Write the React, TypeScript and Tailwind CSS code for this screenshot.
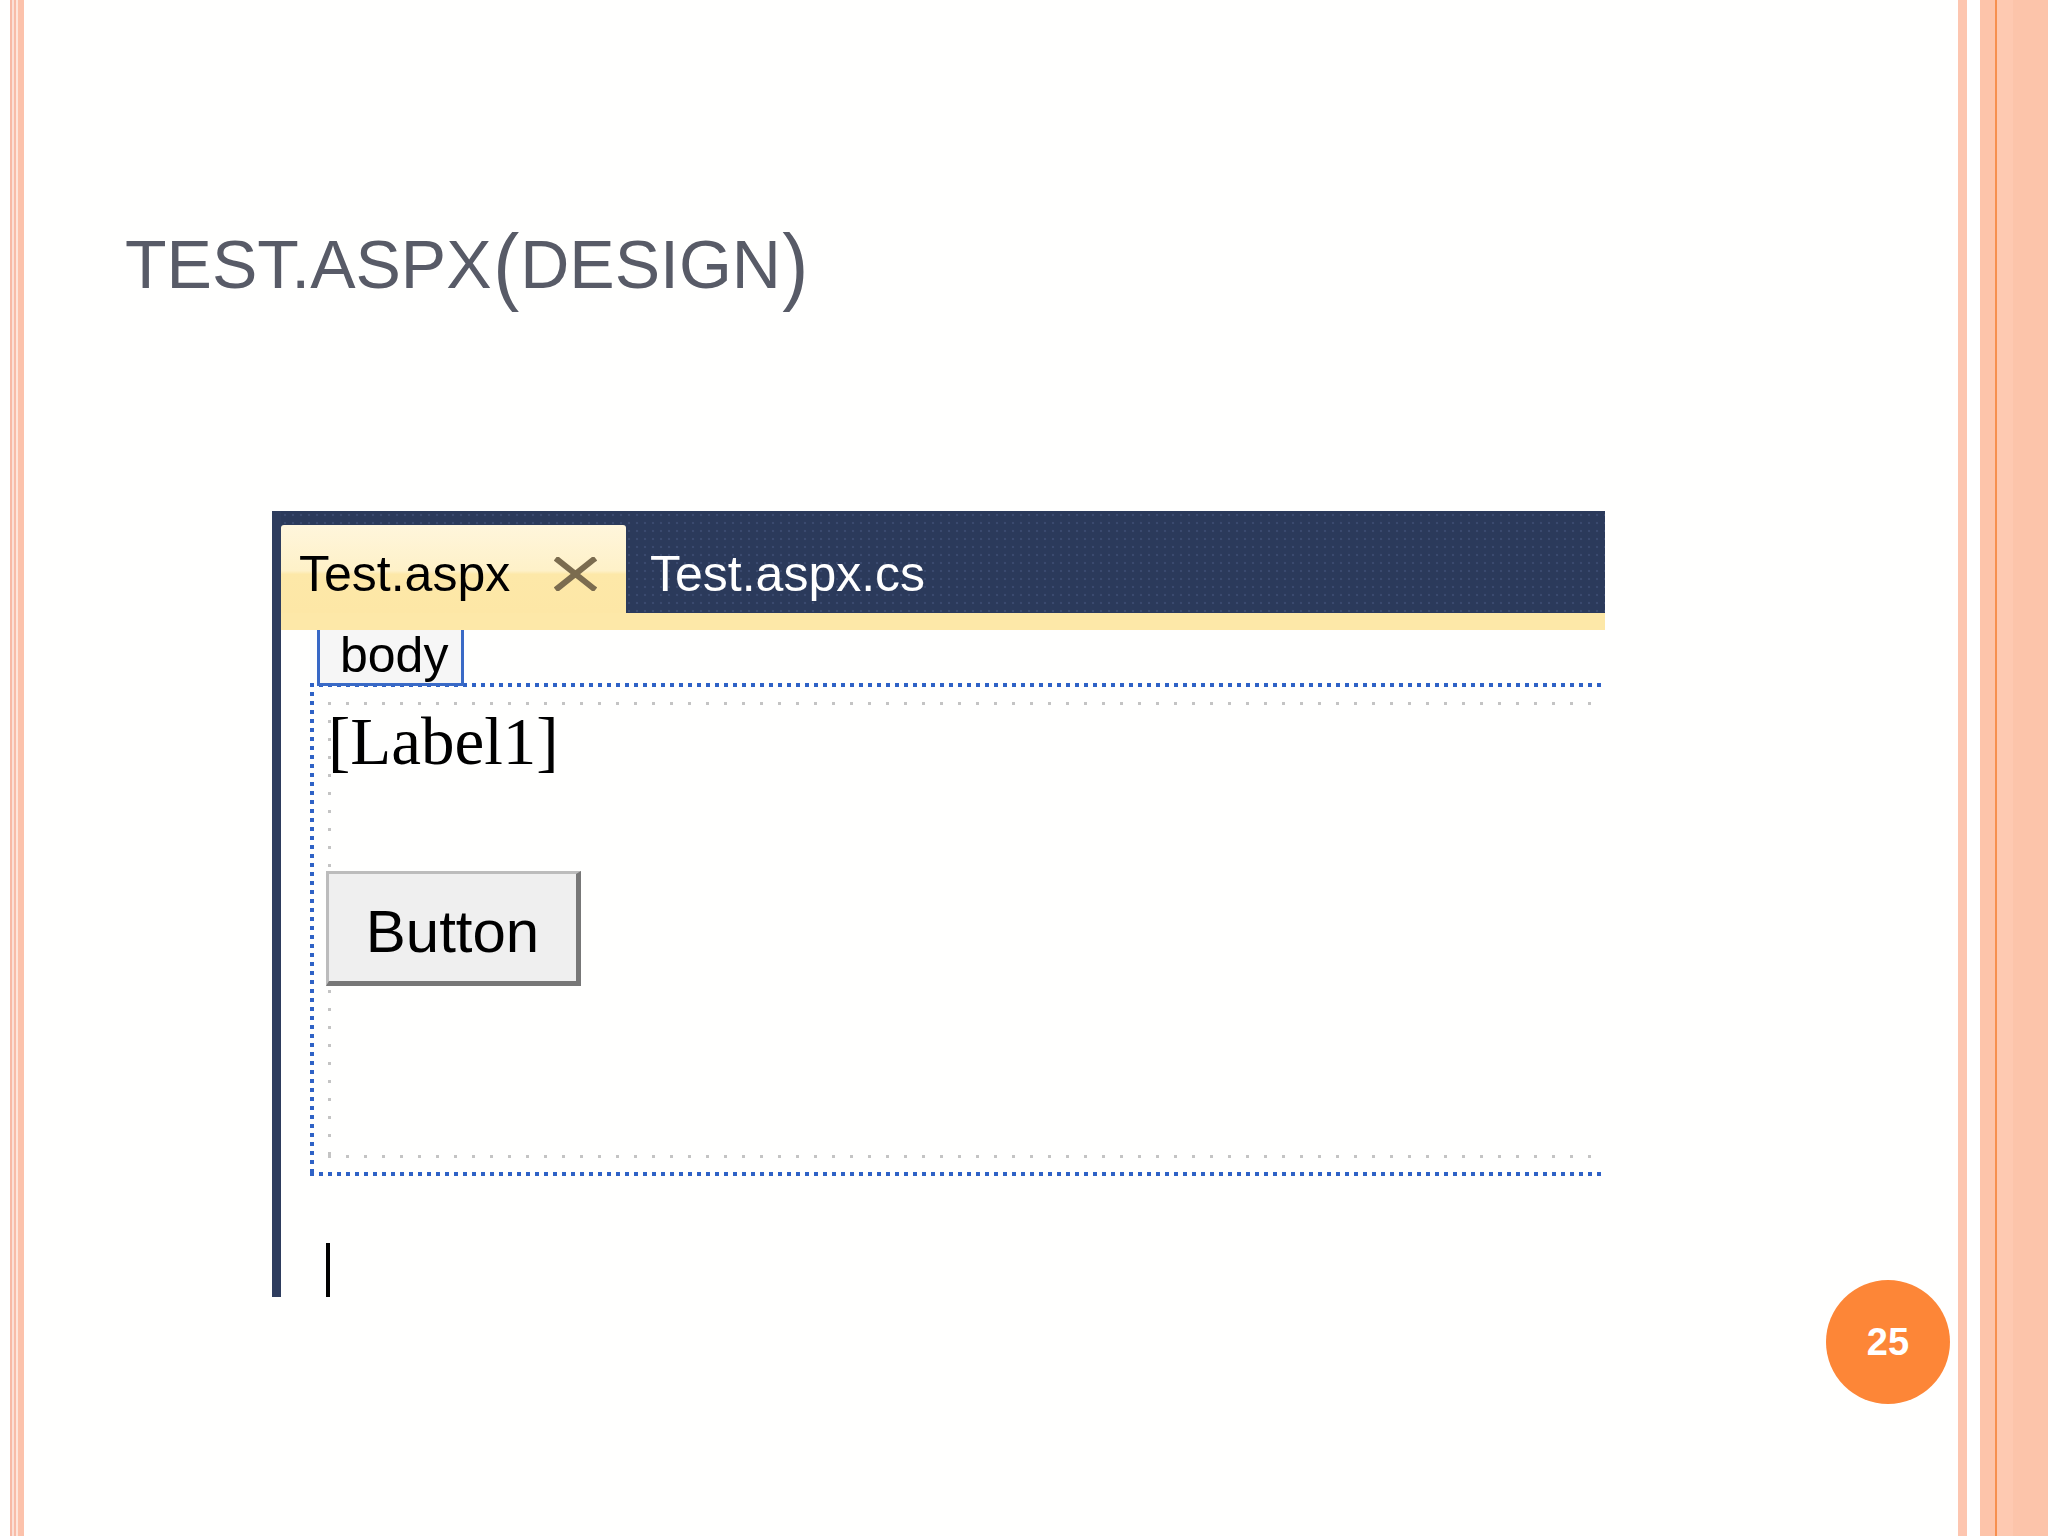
import React from "react";

export default function App() {
  return (
    <div className="w-[2048px] h-[1536px] flex bg-[#fffffe] overflow-hidden font-['Liberation_Sans',Arial,sans-serif]">
      {/* left decoration */}
      <div className="flex h-full shrink-0">
        <div className="w-[10px]" />
        <div className="w-[2px] bg-[#f7b9a5]" />
        <div className="w-[2px] bg-[#fbe0d6]" />
        <div className="w-[2px] bg-[#f8bca8]" />
        <div className="w-[2px] bg-[#fde6dc]" />
        <div className="w-[6px] bg-[#fcc2ab]" />
      </div>

      {/* main content */}
      <div className="relative flex-1 flex flex-col">
        <h1 className="pt-[230px] pl-[101px] text-[68px] leading-none text-[#585b67] font-normal whitespace-nowrap">
          TEST.ASPX<span className="inline-block mx-[3px] scale-y-[1.25] scale-x-[1.15]">(</span>DESIGN<span className="inline-block mx-[3px] scale-y-[1.25] scale-x-[1.15]">)</span>
        </h1>

        {/* IDE panel */}
        <div className="mt-[213px] ml-[248px] w-[1333px] flex overflow-hidden">
          <div className="w-[9px] shrink-0 bg-[#2e3d5e]" />
          <div className="flex-1 flex flex-col min-w-0">
            {/* tab header */}
            <div className="h-[102px] flex items-end bg-[#2b3a5b] bg-[radial-gradient(#3a4a6f_1px,transparent_1.6px)] bg-[length:8px_8px]">
              <div className="w-[345px] h-[88px] flex items-start pt-[24px] pl-[18px] rounded-t-[3px] bg-[linear-gradient(to_bottom,#fff6dc_0%,#fef1c8_52%,#fde8a8_56%,#fde7a6_100%)]">
                <span className="text-[50px] leading-none text-black">Test.aspx</span>
                <svg className="ml-[44px] mt-[8px]" width="43" height="34" viewBox="0 0 43 34">
                  <path d="M4 3 L39 31 M39 3 L4 31" stroke="#7b6c4f" strokeWidth="6" strokeLinecap="square" />
                </svg>
              </div>
              <div className="h-[88px] flex items-start pt-[24px] pl-[24px]">
                <span className="text-[50px] leading-none text-white">Test.aspx.cs</span>
              </div>
            </div>
            <div className="h-[17px] bg-[#fde8a8]" />

            {/* design content */}
            <div className="flex flex-col bg-[#fffffe]">
              <div className="relative z-10 ml-[36px] mb-[-3px] w-[147px] h-[56px] border-l-[3px] border-r-[3px] border-b-[3px] border-[#3a6ac6] bg-[#f6f6f6] pl-[20px]">
                <span className="text-[50px] leading-none text-black">body</span>
              </div>

              <div className="ml-[29px] h-[493px] pt-[19px] pl-[18px] pb-[18px] bg-[linear-gradient(to_right,#2f62c6_4px,transparent_4px),linear-gradient(to_bottom,#2f62c6_4px,transparent_4px),linear-gradient(to_right,#2f62c6_4px,transparent_4px)] bg-[length:9px_4px,4px_9px,9px_4px] bg-[position:0_0,0_0,0_100%] [background-repeat:repeat-x,repeat-y,repeat-x]">
                <div className="h-[456px] flex flex-col items-start bg-[linear-gradient(to_right,#c4c4c4_3px,transparent_3px),linear-gradient(to_bottom,#c4c4c4_3px,transparent_3px),linear-gradient(to_right,#c4c4c4_3px,transparent_3px)] bg-[length:18px_3px,3px_18px,18px_3px] bg-[position:0_0,0_0,0_100%] [background-repeat:repeat-x,repeat-y,repeat-x]">
                  <div className="mt-[6px] text-[67px] leading-none text-black font-['Liberation_Serif','Times_New_Roman',serif]">
                    [Label1]
                  </div>
                  <div className="mt-[96px] ml-[-2px] w-[255px] h-[115px] flex items-center justify-center pt-[8px] border-t-[3px] border-l-[3px] border-r-[5px] border-b-[5px] border-t-[#bcbcbc] border-l-[#bcbcbc] border-r-[#777777] border-b-[#777777] bg-[#efefef]">
                    <span className="text-[60px] leading-none text-black">Button</span>
                  </div>
                </div>
              </div>

              <div className="mt-[67px] ml-[45px] w-[4px] h-[54px] bg-black" />
            </div>
          </div>
        </div>

        {/* slide number */}
        <div className="absolute left-[1802px] top-[1280px] w-[124px] h-[124px] rounded-full bg-[#fd8637] flex items-center justify-center">
          <span className="text-[38px] font-bold leading-none text-white">25</span>
        </div>
      </div>

      {/* right decoration */}
      <div className="flex h-full shrink-0">
        <div className="w-[9px] bg-[#fdc6b0]" />
        <div className="w-[13px] bg-white" />
        <div className="w-[15px] bg-[#fdc4aa]" />
        <div className="w-[2px] bg-[#f7904f]" />
        <div className="w-[16px] bg-[#fec9b1]" />
        <div className="w-[35px] bg-[#fcc4aa]" />
      </div>
    </div>
  );
}
